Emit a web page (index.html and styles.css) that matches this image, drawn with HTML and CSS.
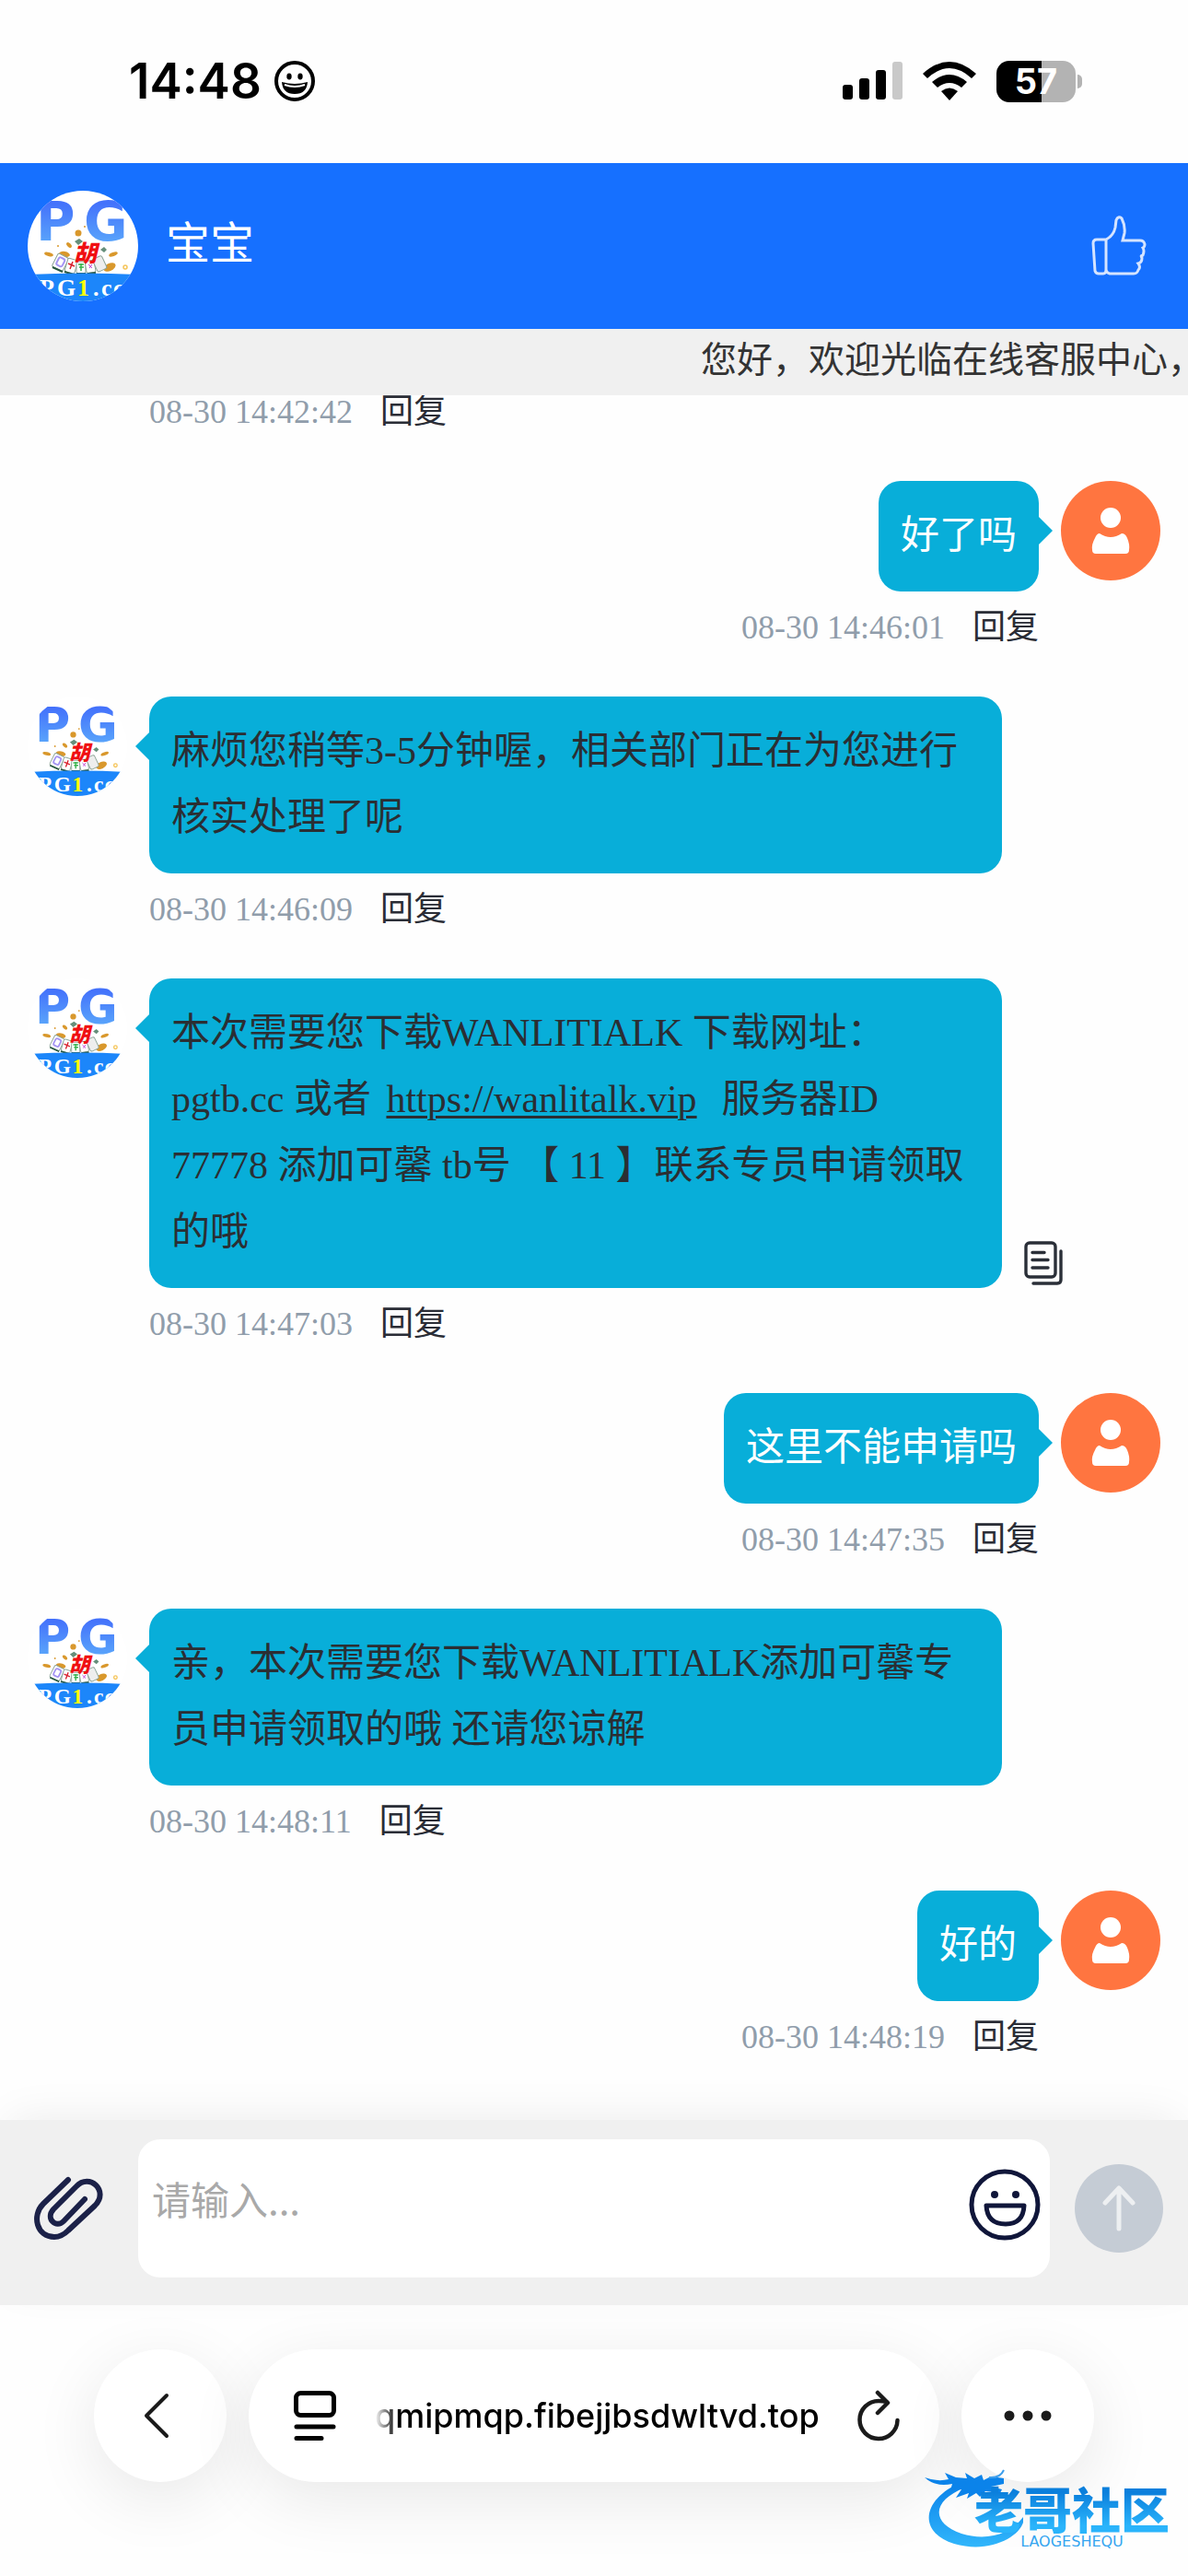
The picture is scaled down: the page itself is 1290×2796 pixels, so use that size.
FILE: index.html
```html
<!DOCTYPE html>
<html lang="zh-CN">
<head>
    <meta charset="UTF-8">
    <meta name="viewport" content="width=device-width, initial-scale=1.0">
    <title>在线客服</title>
    <link rel="stylesheet" href="styles.css">
</head>
<body>
    <!-- shared symbols -->
    <svg class="symbols" aria-hidden="true">
        <defs>
            <linearGradient id="pgFill" x1="0" y1="0" x2="0" y2="1">
                <stop offset="0.2" stop-color="#4472fb"/>
                <stop offset="1" stop-color="#5fb2fb"/>
            </linearGradient>
            <clipPath id="round"><circle cx="60" cy="60" r="60"/></clipPath>
        </defs>
        <symbol id="logo" viewBox="0 0 120 120">
            <g clip-path="url(#round)">
                <rect width="120" height="120" fill="#fff"/>
                <text x="9 61" y="54" class="logo-pg" fill="url(#pgFill)">PG</text>
                <g fill="#d9982c">
                    <circle cx="55" cy="46" r="3.5"/>
                    <ellipse cx="45" cy="59" rx="3.5" ry="2" transform="rotate(45 45 59)"/>
                    <ellipse cx="23" cy="69" rx="5" ry="2" transform="rotate(15 23 69)"/>
                    <ellipse cx="40" cy="69" rx="6" ry="3" transform="rotate(10 40 69)"/>
                    <ellipse cx="93" cy="69" rx="5" ry="2" transform="rotate(-20 93 69)"/>
                    <ellipse cx="89" cy="83" rx="7" ry="4" transform="rotate(-25 89 83)"/>
                    <circle cx="33" cy="60" r="1"/>
                    <circle cx="62" cy="39" r="1"/>
                </g>
                <circle cx="106" cy="83" r="2" fill="none" stroke="#f5c55a" stroke-width="1.5"/>
                <path d="M51 55l5-3 4 3-5 4zM79 64l4-3 3 3-3 3z" fill="#668f7b"/>
                <g stroke="#8ba396" stroke-width="1">
                    <rect x="29" y="70" width="13" height="16" rx="2" fill="#fff" transform="rotate(27 36 78)"/>
                    <rect x="42" y="74" width="11" height="15" rx="2" fill="#fff" transform="rotate(16 47 81)"/>
                    <rect x="53" y="77" width="10" height="13" rx="2" fill="#fff"/>
                    <rect x="63" y="76" width="10" height="13" rx="2" fill="#fff" transform="rotate(-10 68 82)"/>
                    <rect x="73" y="72" width="11" height="15" rx="2" fill="#eee" transform="rotate(-25 78 80)"/>
                </g>
                <path d="M27 83L38 88M40 88L50 91M53 90H63M65 90L74 89" stroke="#27573f" stroke-width="2"/>
                <rect x="32" y="73" width="7" height="9" rx="2" fill="none" stroke="#a595f3" stroke-width="2" transform="rotate(27 36 78)"/>
                <path d="M44 79L51 82M49 77L46 85" stroke="#d8202c" stroke-width="1.5"/>
                <path d="M55 80H61M56 83H61M58 79V87" stroke="#34b24a" stroke-width="1.5"/>
                <path d="M66 80l4 4M70 80l-3 4" stroke="#c03ad0" stroke-width="1"/>
                <text x="50" y="77" class="logo-hu" fill="#f00f12">胡</text>
                <path d="M0 91Q60 88 120 91V120H0z" fill="#1c86fa"/>
                <text x="13 32 54 71 80 93" y="114" class="logo-site" fill="#fff">PG<tspan fill="#ff0">1</tspan>.cc</text>
            </g>
        </symbol>
        <symbol id="user" viewBox="0 0 108 108">
            <circle cx="54" cy="54" r="54" fill="#ff7540"/>
            <circle cx="54" cy="40" r="11" fill="#fff"/>
            <path d="M42 57Q54 65 66 57Q70 57 72 62Q75 69 74 75Q74 79 70 79H38Q34 79 34 75Q33 69 37 62Q39 57 42 57z" fill="#fff"/>
        </symbol>
    </svg>

    <div class="status">
        <div class="status-side">
            <span class="clock">14:48</span>
            <svg width="44" height="44" viewBox="0 0 44 44">
                <circle cx="22" cy="22" r="20" fill="none" stroke="#000" stroke-width="4"/>
                <ellipse cx="16" cy="17" rx="2.7" ry="3.4"/>
                <ellipse cx="28" cy="17" rx="2.7" ry="3.4"/>
                <path d="M8 23Q22 27 36 23Q35 36 22 36Q9 36 8 23z"/>
                <path d="M11 26Q22 30 33 26" fill="none" stroke="#fff" stroke-width="2"/>
            </svg>
        </div>
        <div class="status-side">
            <svg width="65" height="42" viewBox="0 0 65 42">
                <rect y="25" width="11" height="16" rx="3"/>
                <rect x="18" y="18" width="11" height="23" rx="3"/>
                <rect x="36" y="9" width="11" height="32" rx="3"/>
                <rect x="54" width="11" height="41" rx="3" fill="#c9c9c9"/>
            </svg>
            <svg class="wifi" width="58" height="42" viewBox="0 0 58 42">
                <path d="M0 13Q29 -13 58 13L53 18Q29 -4 5 18z"/>
                <path d="M10 22Q29 6 48 22L42 28Q29 18 16 28z"/>
                <path d="M20 32Q29 25 38 32L29 42z"/>
            </svg>
            <div class="battery"><span>57</span></div>
        </div>
    </div>

    <header class="header">
        <svg class="header-avatar"><use href="#logo"/></svg>
        <h1>宝宝</h1>
        <button class="like" aria-label="赞">
            <svg width="60" height="68" viewBox="0 0 60 68" fill="none" stroke="#d5e4ff" stroke-width="3">
                <path d="M16 27V59Q16 64 13 64H8Q5 64 4 61L2 31Q2 27 6 27H16Q24 23 26 14L27 6Q29 1 33 4Q37 12 36 20L34 28H53Q57 28 58 32Q58 35 56 36Q58 39 56 44Q53 44 55 47Q55 52 51 53Q54 57 51 60Q50 64 46 64H20Q16 63 16 59"/>
            </svg>
        </button>
    </header>

    <div class="notice">您好，欢迎光临在线客服中心，</div>

    <main class="chat">
        <div class="row">
            <div class="body indent">
                <div class="meta"><time>08-30 14:42:42</time><button>回复</button></div>
            </div>
        </div>

        <div class="row mine">
            <svg class="avatar"><use href="#user"/></svg>
            <div class="body">
                <div class="bubble">好了吗</div>
                <div class="meta"><time>08-30 14:46:01</time><button>回复</button></div>
            </div>
        </div>

        <div class="row">
            <svg class="avatar"><use href="#logo"/></svg>
            <div class="body">
                <div class="bubble">麻烦您稍等3-5分钟喔，相关部门正在为您进行核实处理了呢</div>
                <div class="meta"><time>08-30 14:46:09</time><button>回复</button></div>
            </div>
        </div>

        <div class="row">
            <svg class="avatar"><use href="#logo"/></svg>
            <div class="body">
                <div class="line">
                    <div class="bubble">本次需要您下载WANLITIALK 下载网址：pgtb.cc 或者 <a href="#">https://wanlitalk.vip</a>&nbsp; 服务器ID 77778 添加可馨 tb号 【 11 】联系专员申请领取的哦</div>
                    <button class="copy" aria-label="复制">
                        <svg width="42" height="48" viewBox="0 0 42 48" fill="none" stroke="#2a2f38" stroke-width="3.4" stroke-linecap="round">
                            <rect x="2" y="2" width="32" height="37" rx="4"/>
                            <path d="M9 12.5H22M9 20.5H26M9 29H26M40 11V42Q40 46 36 46H10"/>
                        </svg>
                    </button>
                </div>
                <div class="meta"><time>08-30 14:47:03</time><button>回复</button></div>
            </div>
        </div>

        <div class="row mine">
            <svg class="avatar"><use href="#user"/></svg>
            <div class="body">
                <div class="bubble">这里不能申请吗</div>
                <div class="meta"><time>08-30 14:47:35</time><button>回复</button></div>
            </div>
        </div>

        <div class="row">
            <svg class="avatar"><use href="#logo"/></svg>
            <div class="body">
                <div class="bubble">亲，本次需要您下载WANLITIALK添加可馨专员申请领取的哦 还请您谅解</div>
                <div class="meta"><time>08-30 14:48:11</time><button>回复</button></div>
            </div>
        </div>

        <div class="row mine">
            <svg class="avatar"><use href="#user"/></svg>
            <div class="body">
                <div class="bubble">好的</div>
                <div class="meta"><time>08-30 14:48:19</time><button>回复</button></div>
            </div>
        </div>
    </main>

    <form class="composer">
        <button type="button" aria-label="附件">
            <svg width="76" height="70" viewBox="0 0 76 70" fill="none" stroke="#1b2148" stroke-width="6" stroke-linecap="round">
                <path d="M37 4L10 30C-3 43 3 66 22 66Q30 66 37 59L66 32C82 16 60 -4 46 11L21 36C12 46 24 57 32 49L55 25"/>
            </svg>
        </button>
        <div class="field">
            <textarea aria-label="消息" placeholder="请输入..."></textarea>
            <button type="button" aria-label="表情">
                <svg width="78" height="78" viewBox="0 0 78 78" fill="none" stroke="#10163a" stroke-width="5">
                    <circle cx="39" cy="39" r="36"/>
                    <circle cx="28" cy="28" r="4" fill="#10163a" stroke="none"/>
                    <circle cx="51" cy="28" r="4" fill="#10163a" stroke="none"/>
                    <path d="M19 40H60Q59 60 40 60Q20 60 19 40z" stroke-linejoin="round"/>
                </svg>
            </button>
        </div>
        <button type="submit" class="send" aria-label="发送">
            <svg width="36" height="50" viewBox="0 0 36 50" fill="none" stroke="#edeff1" stroke-width="5" stroke-linecap="round" stroke-linejoin="round">
                <path d="M18 47V3M3 19L18 3L33 19"/>
            </svg>
        </button>
    </form>

    <footer class="browser">
        <button class="glass back" aria-label="后退">
            <svg width="28" height="50" viewBox="0 0 28 50" fill="none" stroke="#1b1b1b" stroke-width="4" stroke-linecap="round" stroke-linejoin="round">
                <path d="M25 3L3 25L25 47"/>
            </svg>
        </button>
        <div class="glass address">
            <button aria-label="页面设置">
                <svg width="46" height="54" viewBox="0 0 46 54" fill="none" stroke="#000" stroke-width="5" stroke-linecap="round">
                    <rect x="2.5" y="2.5" width="41" height="24" rx="5"/>
                    <path d="M3 39H43M3 51.5H30"/>
                </svg>
            </button>
            <input type="text" aria-label="网址" value="qmipmqp.fibejjbsdwltvd.top" readonly>
            <button aria-label="刷新">
                <svg width="46" height="56" viewBox="0 0 46 56" fill="none" stroke="#1b1b1b" stroke-width="4.5" stroke-linecap="round" stroke-linejoin="round">
                    <path d="M32 13Q28 12 23 12A20.5 20.5 0 1 0 43.5 33M22 3L33 14L22 25"/>
                </svg>
            </button>
        </div>
        <button class="glass" aria-label="更多">
            <svg width="52" height="12" viewBox="0 0 52 12" fill="#1b1b1b">
                <circle cx="6" cy="6" r="5.5"/><circle cx="26" cy="6" r="5.5"/><circle cx="46" cy="6" r="5.5"/>
            </svg>
        </button>
    </footer>

    <!-- community watermark -->
    <div class="watermark">
        <svg width="110" height="88" viewBox="0 0 110 88">
            <defs>
                <linearGradient id="dragon" x1="0" y1="0" x2="0" y2="1">
                    <stop offset="0" stop-color="#0b83ea"/>
                    <stop offset="1" stop-color="#31b6fb"/>
                </linearGradient>
            </defs>
            <path d="M36 16C-2 34 -8 68 32 81C70 92 102 74 107 58L107 52C92 72 66 78 40 70C6 58 8 34 44 20z" fill="url(#dragon)"/>
            <path d="M0 9Q14 14 26 11L22 4L34 9L46 10L44 4L54 10L62 6L64 12L72 8L86 10L86 16L72 19L84 22L82 26L66 24L60 30L56 26L46 32L48 26L34 31L40 22L28 23L30 16Q12 20 0 9z" fill="#0b83ea"/>
            <path d="M70 9Q82 10 86 1" fill="none" stroke="#3e9fec" stroke-width="2"/>
        </svg>
        <div class="watermark-text">
            <strong>老哥社区</strong>
            <span>LAOGESHEQU</span>
        </div>
    </div>
</body>
</html>
```
FILE: styles.css
```css
* {
    box-sizing: border-box;
}

body {
    position: relative;
    display: flex;
    flex-direction: column;
    height: 100vh;
    margin: 0;
    overflow: hidden;
    background-color: #fefefe;
    font-family: "Liberation Serif", "Noto Sans CJK SC", serif;
}

svg {
    display: block;
    flex: none;
}

button {
    display: flex;
    align-items: center;
    justify-content: center;
    flex: none;
    margin: 0;
    padding: 0;
    border: 0;
    background: none;
    font: inherit;
    color: inherit;
    cursor: pointer;
}

.symbols {
    position: absolute;
    width: 0;
    height: 0;
}

.logo-pg {
    font: bold 58px "DejaVu Sans", sans-serif;
}

.logo-hu {
    font: italic 900 25px "Noto Sans CJK SC", sans-serif;
}

.logo-site {
    font: bold 26px "Liberation Serif", serif;
}

/* status bar */
.status {
    display: flex;
    justify-content: space-between;
    flex: none;
    height: 177px;
    padding: 61px 114px 0 140px;
}

.status-side {
    display: flex;
    align-items: center;
    height: 54px;
    gap: 14px;
}

.clock {
    font: 600 53px/54px Inter, sans-serif;
}

.wifi {
    margin: 0 8px;
}

.battery {
    position: relative;
    width: 86px;
    height: 45px;
    margin-right: 8px;
    border-radius: 14px;
    background: linear-gradient(90deg, #000 57%, #b3b3b3 57%);
    color: #fff;
    font: bold 38px/45px Inter, sans-serif;
    text-align: center;
}

.battery::after {
    content: "";
    position: absolute;
    left: 88px;
    top: 15px;
    width: 5px;
    height: 15px;
    border-radius: 0 5px 5px 0;
    background-color: #b3b3b3;
}

/* header */
.header {
    display: flex;
    align-items: center;
    flex: none;
    height: 180px;
    padding: 0 45px 0 30px;
    background-color: #1670ff;
    color: #fff;
}

.header-avatar {
    width: 120px;
    height: 120px;
}

.header h1 {
    flex: 1;
    margin: 0 0 15px 30px;
    font: 400 48px/60px "Noto Sans CJK SC", sans-serif;
}

.notice {
    position: relative;
    flex: none;
    height: 72px;
    padding-left: 59%;
    overflow: hidden;
    background-color: #f0f0f0;
    color: #333;
    font: 39px/60px "Noto Sans CJK SC", sans-serif;
    white-space: nowrap;
}

/* messages */
.chat {
    display: flex;
    flex-direction: column;
    justify-content: flex-end;
    flex: 1;
    min-height: 0;
    padding-bottom: 15px;
    overflow: hidden;
}

.row {
    display: flex;
    align-items: flex-start;
    flex: none;
    gap: 24px;
    padding: 0 30px;
}

.row.mine {
    flex-direction: row-reverse;
}

.avatar {
    width: 108px;
    height: 108px;
}

.body {
    display: flex;
    flex-direction: column;
    align-items: flex-start;
    flex: 1;
    min-width: 0;
}

.body.indent {
    margin-left: 132px;
}

.mine .body {
    align-items: flex-end;
}

.line {
    display: flex;
    align-items: flex-end;
    gap: 24px;
}

/* 80% of the width beside the avatar */
.bubble {
    position: relative;
    max-width: calc((100vw - 132px) * 0.8);
    padding: 23px 24px 25px;
    border-radius: 24px;
    background-color: #08aed9;
    color: #2b2e33;
    font-size: 42px;
    line-height: 72px;
}

.mine .bubble {
    color: #fff;
}

.bubble::before {
    content: "";
    position: absolute;
    top: 39px;
    left: -15px;
    border: 15px solid transparent;
    border-left-width: 0;
    border-right-color: #08aed9;
}

.mine .bubble::before {
    left: auto;
    right: -15px;
    border-width: 15px 0 15px 15px;
    border-left-color: #08aed9;
}

.bubble a {
    margin: 0 6px;
    color: inherit;
    text-decoration-thickness: 3px;
    text-underline-offset: 4px;
}

.copy {
    margin-bottom: 3px;
}

.meta {
    display: flex;
    gap: 30px;
    margin: 12px 0 48px;
    color: #2a2d36;
    font-size: 36px;
    line-height: 54px;
}

.meta time {
    color: #909dab;
}

/* composer */
.composer {
    display: flex;
    align-items: center;
    flex: none;
    gap: 27px;
    height: 201px;
    padding: 21px 27px 30px 37px;
    background-color: #f0f0f0;
    box-shadow: 0 -12px 45px -12px rgba(0, 0, 0, 0.08);
}

.field {
    display: flex;
    align-items: center;
    flex: 1;
    height: 150px;
    margin-left: 10px;
    padding: 0 10px 8px 15px;
    border-radius: 24px;
    background-color: #fff;
}

.field textarea {
    flex: 1;
    min-width: 0;
    height: 72px;
    padding: 0;
    border: 0;
    outline: 0;
    resize: none;
    background: none;
    font: 42px/57px "Noto Sans CJK SC", sans-serif;
}

.field textarea::placeholder {
    color: #a9a9a9;
}

.send {
    width: 96px;
    height: 96px;
    border-radius: 50%;
    background-color: #c5ccd5;
}

/* browser toolbar */
.browser {
    display: flex;
    flex: none;
    gap: 24px;
    height: 294px;
    padding: 48px 102px 0;
}

.glass {
    width: 144px;
    height: 144px;
    border-radius: 72px;
    background-color: #fff;
    box-shadow: 0 18px 72px rgba(0, 0, 0, 0.09);
}

.back {
    padding-right: 9px;
}

.address {
    display: flex;
    align-items: center;
    flex: 1;
    gap: 42px;
    padding: 0 43px 0 49px;
}

.address input {
    flex: 1;
    min-width: 0;
    padding: 0;
    border: 0;
    outline: 0;
    background: none;
    color: #000;
    font: 500 36px/48px Inter, sans-serif;
    text-align: right;
    mask-image: linear-gradient(90deg, transparent, #000 24px);
}

.watermark {
    position: absolute;
    right: 20px;
    bottom: 28px;
    display: flex;
    align-items: flex-end;
}

.watermark-text {
    display: flex;
    flex-direction: column;
    align-items: center;
    margin-left: -56px;
    color: #35a5f0;
    font: 16px/18px "DejaVu Sans", sans-serif;
}

.watermark-text strong {
    background: linear-gradient(#0b7fdc 20%, #2ab4fb 85%);
    background-clip: text;
    color: transparent;
    font: 900 53px/56px "Noto Sans CJK SC", sans-serif;
}
```
